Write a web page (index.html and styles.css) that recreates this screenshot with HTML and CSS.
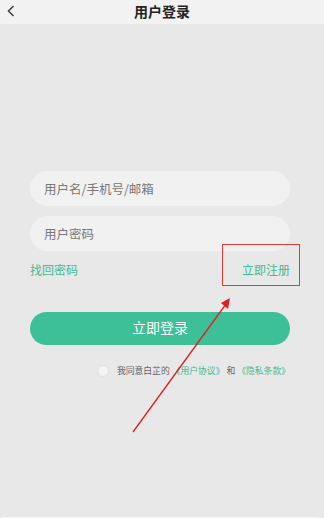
FILE: index.html
```html
<!DOCTYPE html>
<html>
<head>
    <link rel="stylesheet" href="styles.css">
</head>
<body>
    <div class="page">
        <div class="header">
            <span class="back">
                <svg width="8" height="12" viewBox="0 0 8 12"><path d="M6.5 1 L1.5 6 L6.5 11" fill="none" stroke="#444" stroke-width="1.6"/></svg>
            </span>
            <span class="title">用户登录</span>
        </div>

        <div class="form">
            <div class="field">用户名/手机号/邮箱</div>
            <div class="field">用户密码</div>

            <div class="links">
                <span class="link">找回密码</span>
                <span class="link">立即注册</span>
            </div>

            <button class="login-btn">立即登录</button>

            <div class="agree">
                <span class="check"></span>
                <span>我同意白芷的 <span class="green">《用户协议》</span> 和 <span class="green">《隐私条款》</span></span>
            </div>
        </div>

        <div class="bottom-line"></div>

        <!-- annotation -->
        <div class="mark-box"></div>
        <svg class="arrow" width="324" height="518" viewBox="0 0 324 518">
            <line x1="133" y1="432" x2="226" y2="304" stroke="#e02020" stroke-width="1.3"/>
            <polygon points="230,298 221,303 228,309" fill="#e02020"/>
        </svg>
    </div>
</body>
</html>
```

FILE: styles.css
```css
body {
    margin: 0;
    font-family: "Noto Sans CJK SC", sans-serif;
    background: #e8e8e8;
}

.page {
    position: relative;
    width: 324px;
    height: 518px;
    background: #e8e8e8;
    overflow: hidden;
}

.header {
    height: 24px;
    background: #f2f2f2;
    display: flex;
    align-items: center;
    justify-content: center;
    position: relative;
}

.back {
    position: absolute;
    left: 7px;
    top: 5px;
    display: flex;
}

.title {
    font-size: 14px;
    font-weight: bold;
    color: #222;
    margin-top: -2px;
}

.form {
    padding: 147px 34px 0 30px;
}

.field {
    height: 35px;
    border-radius: 18px;
    background: #f1f1f1;
    display: flex;
    align-items: center;
    padding-left: 14px;
    padding-bottom: 1px;
    box-sizing: border-box;
    font-size: 12.5px;
    color: #777;
    margin-bottom: 10px;
}

.links {
    display: flex;
    justify-content: space-between;
    margin-top: 4px;
    font-size: 12px;
    line-height: 18px;
    color: #3dbb92;
}

.login-btn {
    display: block;
    width: 100%;
    height: 33px;
    margin-top: 33px;
    padding: 0 0 3px;
    border: none;
    border-radius: 17px;
    background: #3dbf98;
    color: #fff;
    font-family: inherit;
    font-size: 14px;
}

.agree {
    display: flex;
    align-items: center;
    justify-content: flex-end;
    margin-top: 19px;
    padding-right: 0;
    font-size: 8.8px;
    color: #666;
}

.check {
    width: 10px;
    height: 10px;
    border-radius: 50%;
    background: #f3f3f3;
    border: 1px solid #e0e0e0;
    margin-right: 8px;
}

.green {
    color: #3dbb92;
}

.bottom-line {
    position: absolute;
    left: 3px;
    right: 5px;
    bottom: 0;
    height: 1px;
    background: #f6f6f6;
}

.mark-box {
    position: absolute;
    left: 222px;
    top: 244px;
    width: 76px;
    height: 40px;
    border: 1.5px solid #e53935;
}

.arrow {
    position: absolute;
    left: 0;
    top: 0;
}
```
